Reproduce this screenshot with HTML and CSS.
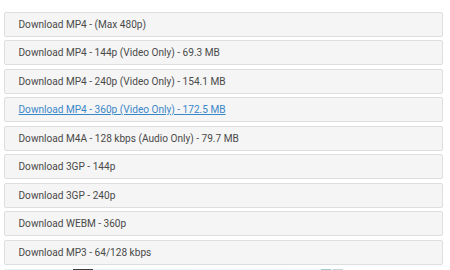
FILE: index.html
```html
<!DOCTYPE html>
<html lang="en">
<head>
    <meta charset="UTF-8">
    <title>Downloads</title>
    <link rel="stylesheet" href="styles.css">
</head>
<body>
    <div class="download-list">
        <div class="dl-btn">Download MP4 - (Max 480p)</div>
        <div class="dl-btn">Download MP4 - 144p (Video Only) - 69.3 MB</div>
        <div class="dl-btn">Download MP4 - 240p (Video Only) - 154.1 MB</div>
        <div class="dl-btn"><a href="#">Download MP4 - 360p (Video Only) - 172.5 MB</a></div>
        <div class="dl-btn">Download M4A - 128 kbps (Audio Only) - 79.7 MB</div>
        <div class="dl-btn">Download 3GP - 144p</div>
        <div class="dl-btn">Download 3GP - 240p</div>
        <div class="dl-btn">Download WEBM - 360p</div>
        <div class="dl-btn">Download MP3 - 64/128 kbps</div>
    </div>

    <!-- preview strip below the list -->
    <div class="preview">
        <span class="thumb"></span>
        <span class="ctrl ctrl-a"></span>
        <span class="ctrl ctrl-b"></span>
    </div>
</body>
</html>
```

FILE: styles.css
```css
body {
    margin: 0;
    padding: 11.5px 7px 0 4px;
    font-family: Roboto, 'Liberation Sans', sans-serif;
    background: #fff;
    overflow: hidden;
}

.download-list {
    display: flex;
    flex-direction: column;
    gap: 3.5px;
}

.dl-btn {
    box-sizing: border-box;
    height: 25px;
    display: flex;
    align-items: center;
    padding: 0 0 0 13.5px;
    background: #f5f5f5;
    border: 1px solid #dedede;
    border-radius: 2px;
    color: #4a4a4a;
    font-size: 10.1px;
}

.dl-btn a {
    color: #3a87c8;
    text-decoration: underline;
}

.preview {
    margin-top: 4px;
    width: 339px;
    height: 10px;
    display: flex;
    background: linear-gradient(90deg, #e6f0f7 0%, #eef5fa 100%);
}

.thumb {
    width: 20px;
    margin-left: 69px;
    background: #3c3c42;
}

.ctrl {
    width: 10px;
    background: #bcd6dc;
}

.ctrl-a {
    margin-left: auto;
    margin-right: 2px;
    background: #9cc7cf;
}

.ctrl-b {
    background: #c9d3d8;
}
```
